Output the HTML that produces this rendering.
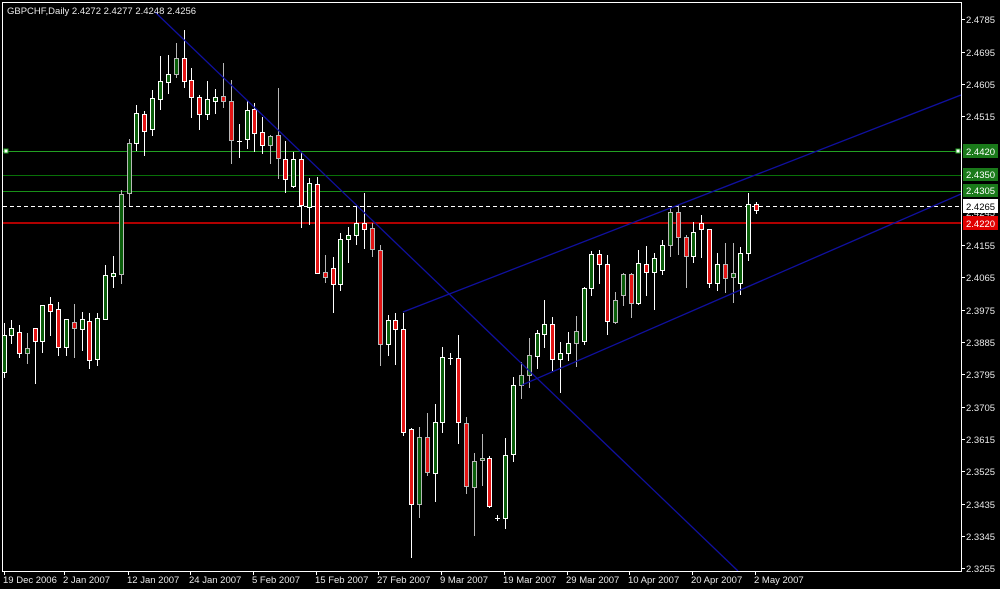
<!DOCTYPE html>
<html><head><meta charset="utf-8"><style>
html,body{margin:0;padding:0;background:#000;width:1000px;height:589px;overflow:hidden}
svg{display:block}
text{font-family:"Liberation Sans","DejaVu Sans",sans-serif;font-size:9.5px;fill:#e8e8e8}
</style></head><body>
<svg id="s" width="1000" height="589" viewBox="0 0 1000 589" shape-rendering="crispEdges">
<rect width="1000" height="589" fill="#000"/>
<line x1="3" y1="151.5" x2="961" y2="151.5" stroke="#22a022"/>
<line x1="3" y1="175.5" x2="961" y2="175.5" stroke="#087008"/>
<line x1="3" y1="191.5" x2="961" y2="191.5" stroke="#189018"/>
<line x1="3" y1="206.5" x2="961" y2="206.5" stroke="#fff" stroke-dasharray="4,3"/>
<line x1="3" y1="223" x2="961" y2="223" stroke="#b00000" stroke-width="2"/>
<rect x="4" y="149" width="4" height="4" fill="#fff" stroke="#22a022"/>
<rect x="956" y="149" width="4" height="4" fill="#fff" stroke="#22a022"/>
<g id="c"></g>
<g shape-rendering="auto" stroke="#1010a0" stroke-width="1.3">
<line x1="155" y1="12" x2="738" y2="571"/>
<line x1="403" y1="312" x2="961" y2="95"/>
<line x1="522" y1="385" x2="961" y2="194"/>
</g>
<line x1="2.5" y1="2" x2="2.5" y2="572" stroke="#fff"/>
<line x1="2" y1="2.5" x2="962" y2="2.5" stroke="#fff"/>
<line x1="961.5" y1="2" x2="961.5" y2="572" stroke="#fff"/>
<line x1="2" y1="571.5" x2="962" y2="571.5" stroke="#fff"/>
<text x="7" y="14">GBPCHF,Daily  2.4272 2.4277 2.4248 2.4256</text>
<g id="ax"></g>
<text x="966" y="181" >2.4335</text>
<text x="966" y="216">2.4245</text>
<rect x="963" y="144" width="35" height="14" fill="#1a7a1a"/><text x="966" y="155" style="fill:#fff">2.4420</text>
<rect x="963" y="168" width="35" height="13" fill="#1a7a1a"/><text x="966" y="178" style="fill:#fff">2.4350</text>
<rect x="963" y="184" width="35" height="13" fill="#1a7a1a"/><text x="966" y="194" style="fill:#fff">2.4305</text>
<rect x="963" y="199" width="35" height="14" fill="#fff"/><text x="966" y="210" style="fill:#000">2.4265</text>
<rect x="963" y="216" width="35" height="14" fill="#e00000"/><text x="966" y="227" style="fill:#fff">2.4220</text>
</svg>
<script>
var D=[
[4,335,372,323,377,'g'],[11,328,335,320,343,'g'],[19,332,353,325,357,'r'],[27,348,353,333,363,'g',1],[35,328,341,328,383,'r'],
[42,305,341,305,352,'g'],[50,304,311,297,335,'r'],[58,309,347,302,355,'r'],[66,319,347,319,355,'g'],[74,322,328,304,357,'r',1],
[82,319,329,312,350,'g'],[89,321,360,313,368,'r'],[97,318,359,313,365,'g'],[105,275,319,265,319,'g'],[113,273,276,256,287,'g'],
[121,194,274,190,283,'g',1],[129,143,193,139,205,'g',1],[136,113,143,105,150,'g'],[144,114,131,111,155,'r'],[152,98,129,90,135,'g'],
[160,81,99,56,109,'g'],[168,74,82,55,93,'g'],[176,58,74,43,77,'g',1],[184,58,81,30,87,'r'],[191,80,97,68,117,'r'],
[199,97,114,95,129,'r'],[207,99,114,81,119,'g'],[215,97,101,89,113,'g'],[223,96,101,63,107,'r',1],[231,101,140,80,163,'r',1],
[239,141,141,124,157,'d'],[247,110,139,101,148,'g'],[254,109,133,103,151,'r'],[262,132,145,117,153,'r'],[270,136,145,135,163,'g',1],
[278,135,158,88,178,'r',1],[285,159,179,141,192,'r'],[293,159,186,152,187,'g'],[301,159,205,152,227,'r'],[309,183,207,178,224,'g'],
[317,184,273,177,273,'r'],[325,272,277,255,282,'r',1],[333,268,284,257,312,'r'],[340,239,284,233,290,'g'],[348,235,239,227,262,'g'],
[356,223,235,205,244,'g'],[364,223,229,193,248,'r'],[372,228,249,223,256,'r',1],[380,250,344,245,365,'r',1],[388,320,344,315,355,'g'],
[395,320,329,313,364,'r'],[403,329,432,313,435,'r'],[411,429,504,428,557,'r'],[419,437,504,427,517,'g',1],[427,437,472,413,475,'r',1],
[435,422,473,404,501,'g'],[442,357,422,347,432,'g'],[450,358,358,353,364,'d'],[458,358,422,335,443,'r'],[466,423,486,417,493,'r',1],
[474,461,487,453,535,'g',1],[482,458,460,434,485,'g',1],[489,458,506,456,507,'r'],[497,518,518,515,520,'d'],[505,455,518,438,528,'g'],
[513,385,454,377,461,'g'],[521,375,385,362,398,'g',1],[529,355,375,338,387,'g',1],[537,333,356,330,368,'g'],[544,324,334,300,347,'g'],
[552,324,359,317,370,'r'],[560,353,359,342,392,'g'],[568,343,353,332,360,'g'],[576,331,343,316,366,'g',1],[584,288,341,287,344,'g'],
[591,254,288,251,295,'g'],[599,254,264,250,283,'r'],[607,264,321,255,334,'r'],[615,300,322,292,323,'g',1],[623,274,295,273,305,'g',1],
[631,274,303,273,317,'r',1],[638,263,303,250,304,'g'],[646,264,272,246,295,'r'],[654,258,272,253,309,'g'],[662,245,270,240,274,'g'],
[670,212,245,208,256,'g',1],[678,212,237,205,254,'r',1],[686,237,256,235,287,'r',1],[693,232,256,222,262,'g'],[701,223,229,215,257,'r'],
[709,229,283,229,287,'r'],[717,264,283,253,290,'g'],[725,264,278,243,292,'r',1],[733,273,277,243,302,'g',1],[740,253,283,247,294,'g'],
[748,204,253,193,260,'g'],[756,204,210,202,213,'r']
];
var NS='http://www.w3.org/2000/svg',g=document.getElementById('c');
function el(t,a){var e=document.createElementNS(NS,t);for(var k in a)e.setAttribute(k,a[k]);return e;}
D.forEach(function(d){
 var cx=d[0],t=d[1],b=d[2],h=d[3],l=d[4],c=d[5],st=d[6]?'#b8b8b8':'#fff';
 g.appendChild(el('line',{x1:cx+.5,y1:h,x2:cx+.5,y2:l+1,stroke:st}));
 if(c=='d'){g.appendChild(el('line',{x1:cx-2,y1:t+.5,x2:cx+3,y2:t+.5,stroke:st}));return;}
 if(b-t<2)b=t+2;
 g.appendChild(el('rect',{x:cx-1.5,y:t+.5,width:4,height:b-t,fill:c=='g'?'#0a5e0a':'#e41414',stroke:st}));
});
var ax=document.getElementById('ax');
var P=[['2.4785',19],['2.4695',52],['2.4605',84],['2.4515',116],['2.4155',245],['2.4065',277],['2.3975',310],['2.3885',342],['2.3795',374],['2.3705',407],['2.3615',439],['2.3525',471],['2.3435',504],['2.3345',536],['2.3255',568]];
P.forEach(function(p){ax.appendChild(el('line',{x1:962,y1:p[1]+.5,x2:965,y2:p[1]+.5,stroke:'#fff'}));var t=el('text',{x:966,y:p[1]+4});t.textContent=p[0];ax.appendChild(t);});
var T=[['19 Dec 2006',4],['2 Jan 2007',64],['12 Jan 2007',128],['24 Jan 2007',190],['5 Feb 2007',253],['15 Feb 2007',316],['27 Feb 2007',378],['9 Mar 2007',441],['19 Mar 2007',504],['29 Mar 2007',567],['10 Apr 2007',629],['20 Apr 2007',692],['2 May 2007',755]];
T.forEach(function(p){ax.appendChild(el('line',{x1:p[1]+.5,y1:572,x2:p[1]+.5,y2:575,stroke:'#fff'}));var t=el('text',{x:p[1]-1,y:583});t.textContent=p[0];ax.appendChild(t);});
</script>
</body></html>
